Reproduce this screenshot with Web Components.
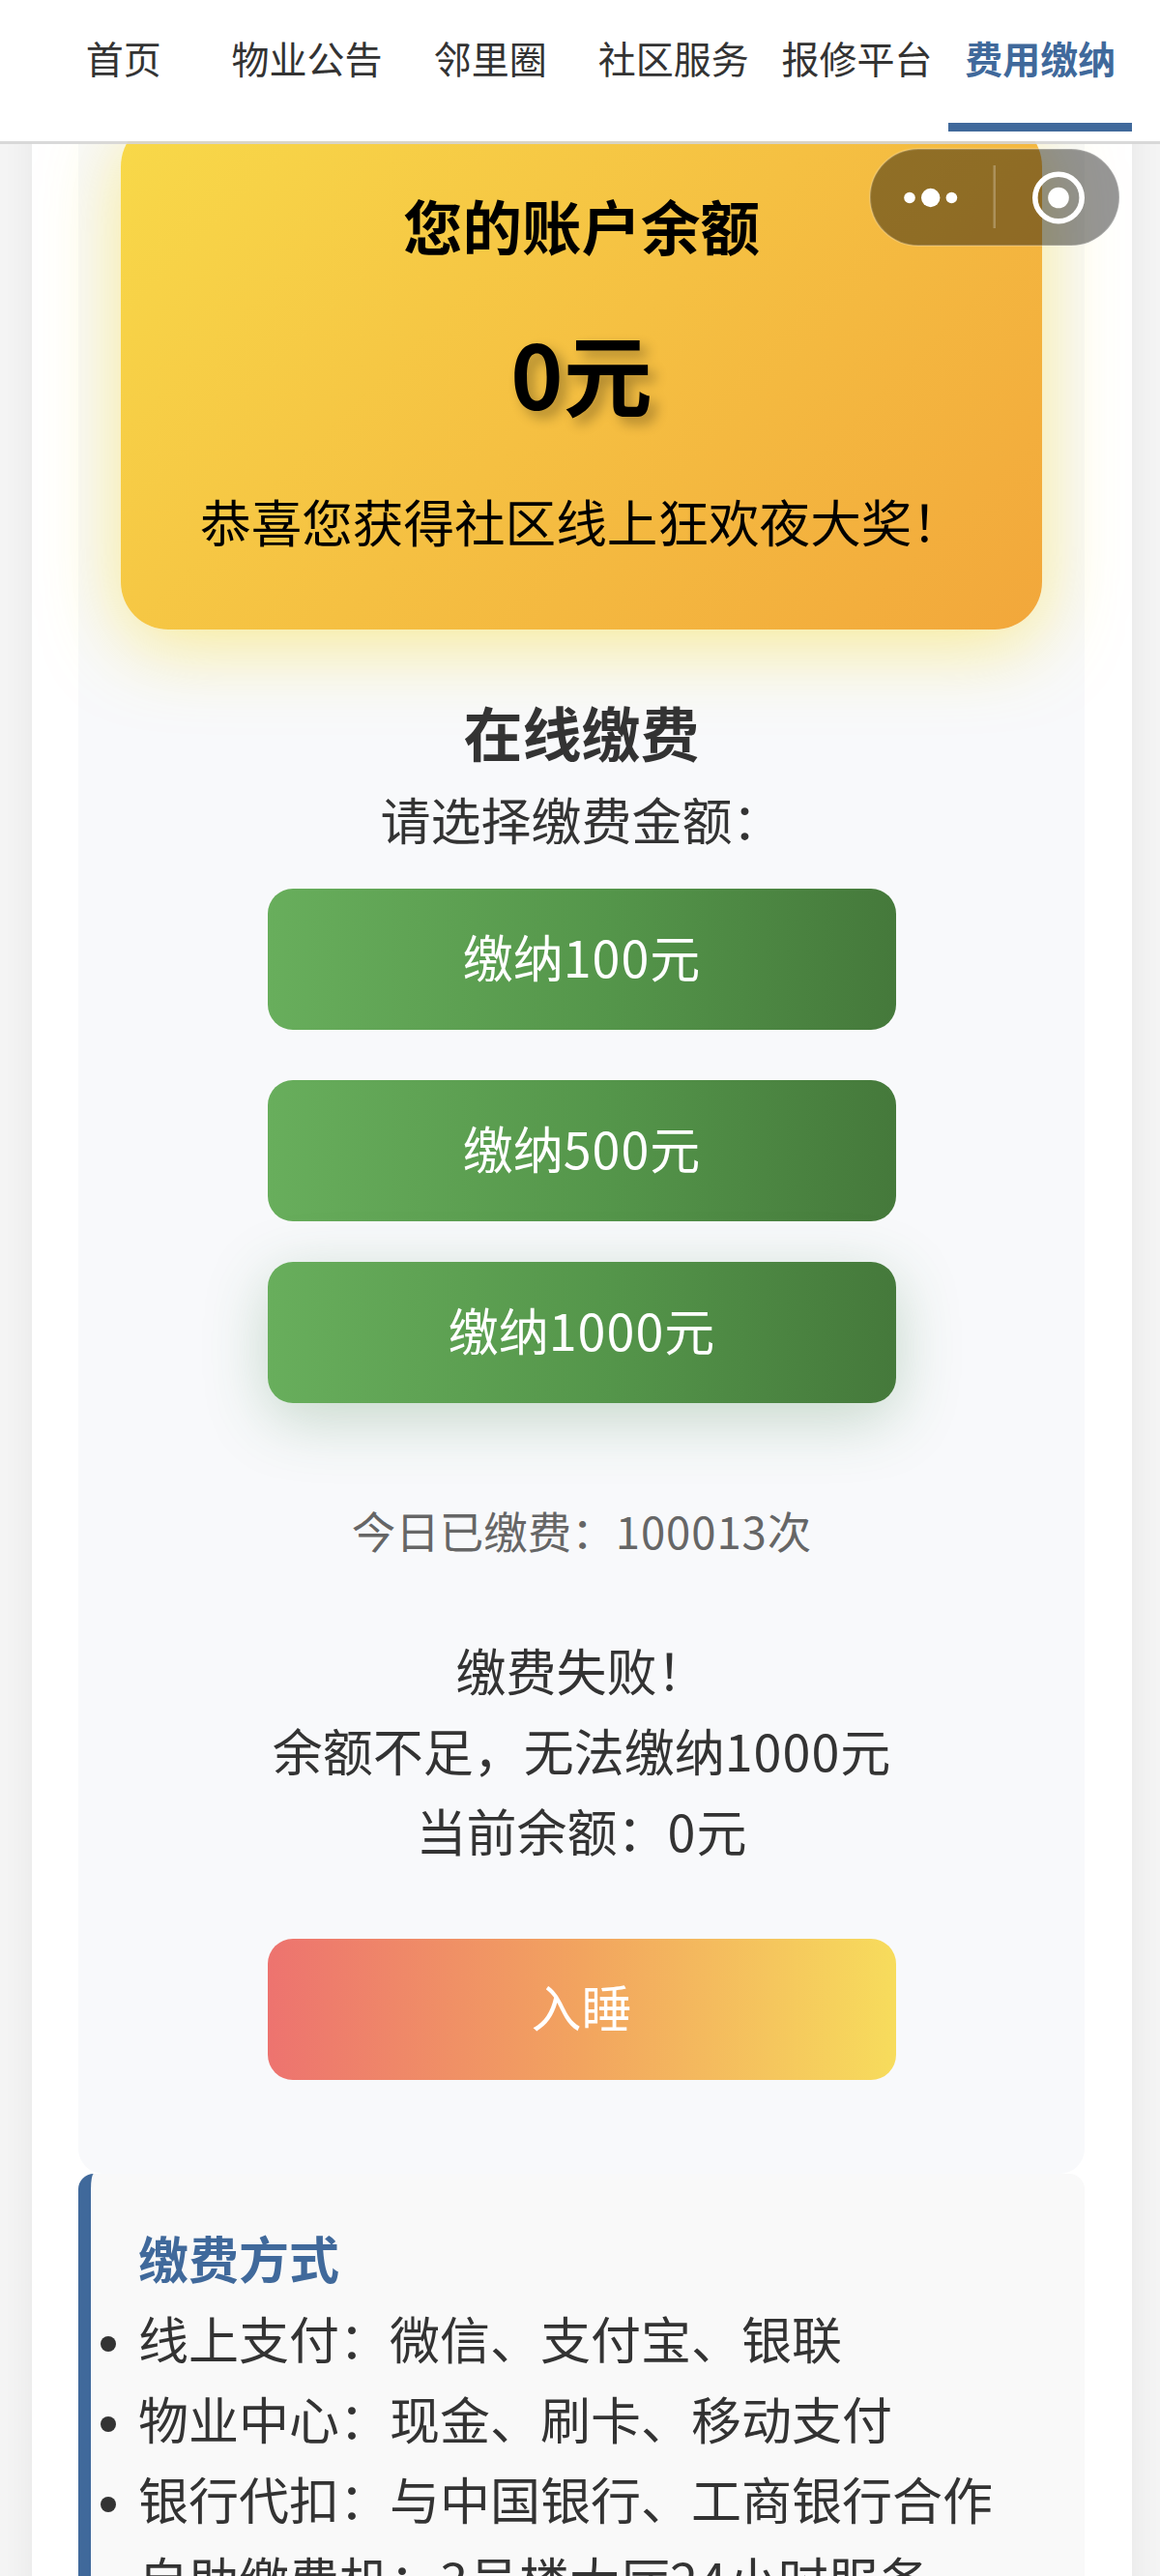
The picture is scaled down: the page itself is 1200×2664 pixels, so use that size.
<!DOCTYPE html>
<html lang="zh-CN">
<head>
  <meta charset="UTF-8">
  <meta name="viewport" content="width=device-width, initial-scale=1.0">
  <title>费用缴纳</title>
  <style>
    html {
      height: 2664px;
      overflow: hidden;
    }
    body {
      margin: 0;
      height: 2664px;
      overflow: hidden;
      background-color: #f4f4f4;
      color: #333;
      font-family: "Noto Sans CJK SC", sans-serif;
      font-size: 52px;
      line-height: 83px;
      --azul: #40699b;
    }
  </style>
</head>
<body>

<nav-bar>
  <nav-tab>首页</nav-tab>
  <nav-tab>物业公告</nav-tab>
  <nav-tab>邻里圈</nav-tab>
  <nav-tab>社区服务</nav-tab>
  <nav-tab>报修平台</nav-tab>
  <nav-tab active>费用缴纳</nav-tab>
</nav-bar>
<capsule-menu></capsule-menu>

<page-container>
  <pay-panel>
    <balance-card>
      <span slot="title">您的账户余额</span>
      <span slot="amount">0元</span>
      恭喜您获得社区线上狂欢夜大奖！
    </balance-card>
    <span slot="title">在线缴费</span>
    <span slot="hint">请选择缴费金额：</span>
    <pay-button slot="options">缴纳<num-text>100</num-text>元</pay-button>
    <pay-button slot="options">缴纳<num-text>500</num-text>元</pay-button>
    <pay-button slot="options" hovered>缴纳<num-text>1000</num-text>元</pay-button>
    <span slot="count">今日已缴费：<num-text>100013</num-text>次</span>
    <span slot="result">缴费失败！<br>余额不足，无法缴纳<num-text>1000</num-text>元<br>当前余额：<num-text>0</num-text>元</span>
    <pay-button slot="action" kind="sleep">入睡</pay-button>
  </pay-panel>
  <info-box>
    <span slot="title">缴费方式</span>
    <info-item>线上支付：微信、支付宝、银联</info-item>
    <info-item>物业中心：现金、刷卡、移动支付</info-item>
    <info-item>银行代扣：与中国银行、工商银行合作</info-item>
    <info-item>自助缴费机：<num-text>3</num-text>号楼大厅<num-text>24</num-text>小时服务</info-item>
  </info-box>
</page-container>

<script>
function define(name, html) {
  customElements.define(name, class extends HTMLElement {
    constructor() {
      super();
      this.attachShadow({ mode: 'open' }).innerHTML = html;
    }
  });
}

// Barra superior, queda por encima del contenido
define('nav-bar', `
  <style>
    :host {
      position: fixed;
      top: 0;
      left: 0;
      right: 0;
      z-index: 10;
      box-sizing: border-box;
      height: 149px;
      padding: 0 29px 0 33px;
      display: grid;
      grid-template-columns: repeat(6, 1fr);
      background-color: #fff;
      border-bottom: 3px solid rgba(213, 213, 213, 0.9);
      background-clip: padding-box;
    }
  </style>
  <slot></slot>`);

define('nav-tab', `
  <style>
    :host {
      display: block;
      box-sizing: border-box;
      height: 136px;
      padding-top: 28px;
      font-size: 39px;
      line-height: 62px;
      text-align: center;
      white-space: nowrap;
      border-bottom: 9px solid transparent;
    }
    :host([active]) {
      color: var(--azul);
      font-weight: bold;
      border-bottom-color: var(--azul);
    }
  </style>
  <slot></slot>`);

define('capsule-menu', `
  <style>
    :host {
      position: fixed;
      top: 153px;
      right: 41px;
      z-index: 11;
      display: block;
      width: 260px;
      height: 102px;
    }
    svg { display: block; }
  </style>
  <svg width="260" height="102" viewBox="0 0 260 102">
    <rect x="1" y="1" width="258" height="100" rx="50" fill="rgba(0,0,0,0.41)" stroke="rgba(255,255,255,0.2)" stroke-width="2"/>
    <g fill="#fff">
      <circle cx="42" cy="51.5" r="5.8"/>
      <circle cx="63.7" cy="51.5" r="9.7"/>
      <circle cx="85.4" cy="51.5" r="5.8"/>
      <circle cx="196" cy="51.5" r="10.8"/>
    </g>
    <rect x="128.5" y="18" width="2.5" height="65" fill="rgba(255,255,255,0.25)"/>
    <circle cx="196" cy="51.5" r="24.2" fill="none" stroke="#fff" stroke-width="5.6"/>
  </svg>`);

define('page-container', `
  <style>
    :host {
      display: block;
      margin: 0 29px 0 33px;
      padding: 0 49px 0 48px;
      background-color: #fff;
      box-shadow: 0 0 32px rgba(0, 0, 0, 0.06);
    }
  </style>
  <slot></slot>`);

define('pay-panel', `
  <style>
    :host {
      display: flex;
      flex-direction: column;
      align-items: center;
      padding: 123px 44px 97px;
      border-radius: 26px;
      background-color: #f8f9fb;
      text-align: center;
    }
    h3 {
      margin: 57px 0 0;
      font-size: 61px;
      line-height: 97px;
    }
    p { margin: 0; }
    .options {
      display: grid;
      gap: 52px;
      margin-top: 31px;
    }
    .count {
      margin-top: 85px;
      font-size: 45.5px;
      line-height: 73px;
      color: #666;
    }
    .result { margin: 66px 0 71px; }
  </style>
  <slot></slot>
  <h3><slot name="title"></slot></h3>
  <p><slot name="hint"></slot></p>
  <div class="options"><slot name="options"></slot></div>
  <p class="count"><slot name="count"></slot></p>
  <p class="result"><slot name="result"></slot></p>
  <slot name="action"></slot>`);

define('balance-card', `
  <style>
    :host {
      display: block;
      box-sizing: border-box;
      align-self: stretch;
      height: 528px;
      padding-top: 61px;
      border-radius: 49px;
      color: #000;
      font-size: 52.6px;
      line-height: 84px;
      white-space: nowrap;
      background: linear-gradient(135deg, #f8d949, #f2a73b);
      box-shadow: 0 16px 78px rgba(247, 222, 60, 0.55);
    }
    .title {
      font-size: 61.5px;
      font-weight: bold;
      line-height: 98px;
    }
    .amount {
      margin: 28px 0 39px;
      font-size: 92px;
      font-weight: bold;
      line-height: 147px;
      text-shadow: 7px 7px 13px rgba(0, 0, 0, 0.3);
    }
  </style>
  <div class="title"><slot name="title"></slot></div>
  <div class="amount"><slot name="amount"></slot></div>
  <div><slot></slot></div>`);

define('pay-button', `
  <style>
    :host {
      display: block;
      width: 650px;
      height: 146px;
      line-height: 140px;
      border-radius: 26px;
      color: #fff;
      text-align: center;
      background: linear-gradient(90deg, #68ae5c, #54954a 55%, #45793b);
    }
    :host([hovered]) {
      transform: translateY(-10px);
      box-shadow: 0 16px 65px rgba(50, 120, 60, 0.26);
    }
    :host([kind="sleep"]) {
      background: linear-gradient(90deg, #ed736f, #f2a45f 50%, #f7dc5c);
    }
  </style>
  <slot></slot>`);

define('info-box', `
  <style>
    :host {
      display: block;
      padding: 45px 49px 49px;
      border-left: 13px solid var(--azul);
      border-radius: 16px;
      background-color: #f9f9f9;
    }
    h4 {
      margin: 0;
      font-size: 52px;
      color: var(--azul);
    }
    ul {
      margin: 0;
      padding: 0;
    }
  </style>
  <h4><slot name="title"></slot></h4>
  <ul><slot></slot></ul>`);

define('info-item', `
  <style>
    :host {
      display: flex;
      align-items: center;
      white-space: nowrap;
      margin-left: -39px;
    }
    :host::before {
      content: "";
      flex: none;
      width: 16px;
      height: 16px;
      margin: 12px 23px 0 0;
      border-radius: 50%;
      background-color: #333;
    }
  </style>
  <div><slot></slot></div>`);

// Cifras un poco más abiertas que el texto, sin espacios alrededor
define('num-text', `<style>:host { letter-spacing: 0.02em; }</style><slot></slot>`);
</script>

</body>
</html>
